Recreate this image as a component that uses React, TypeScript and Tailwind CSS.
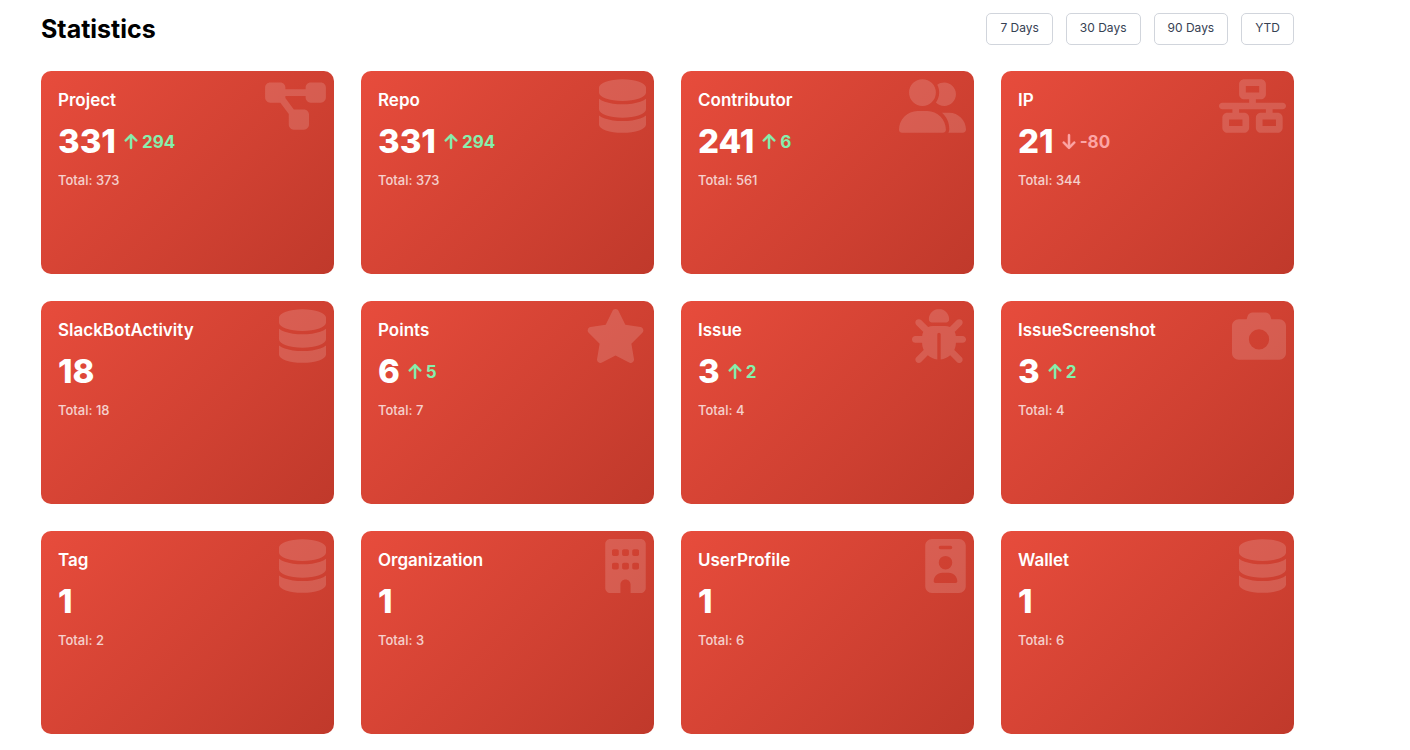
import type { IconType } from "react-icons";
import {
  FaArrowDown,
  FaArrowUp,
  FaBug,
  FaBuilding,
  FaCamera,
  FaDatabase,
  FaDiagramProject,
  FaIdBadge,
  FaNetworkWired,
  FaStar,
  FaUserGroup,
} from "react-icons/fa6";

interface Stat {
  name: string;
  count: number;
  change?: number;
  total: number;
  icon: IconType;
  iconWidth: string;
}

const stats: Stat[] = [
  { name: "Project", count: 331, change: 294, total: 373, icon: FaDiagramProject, iconWidth: "w-[61px]" },
  { name: "Repo", count: 331, change: 294, total: 373, icon: FaDatabase, iconWidth: "w-[47px]" },
  { name: "Contributor", count: 241, change: 6, total: 561, icon: FaUserGroup, iconWidth: "w-[67px]" },
  { name: "IP", count: 21, change: -80, total: 344, icon: FaNetworkWired, iconWidth: "w-[67px]" },
  { name: "SlackBotActivity", count: 18, total: 18, icon: FaDatabase, iconWidth: "w-[47px]" },
  { name: "Points", count: 6, change: 5, total: 7, icon: FaStar, iconWidth: "w-[61px]" },
  { name: "Issue", count: 3, change: 2, total: 4, icon: FaBug, iconWidth: "w-[54px]" },
  { name: "IssueScreenshot", count: 3, change: 2, total: 4, icon: FaCamera, iconWidth: "w-[54px]" },
  { name: "Tag", count: 1, total: 2, icon: FaDatabase, iconWidth: "w-[47px]" },
  { name: "Organization", count: 1, total: 3, icon: FaBuilding, iconWidth: "w-[41px]" },
  { name: "UserProfile", count: 1, total: 6, icon: FaIdBadge, iconWidth: "w-[41px]" },
  { name: "Wallet", count: 1, total: 6, icon: FaDatabase, iconWidth: "w-[47px]" },
];

const periods = ["7 Days", "30 Days", "90 Days", "YTD"];

function Change({ value }: { value: number }) {
  const up = value > 0;
  const Arrow = up ? FaArrowUp : FaArrowDown;
  return (
    <span
      className={
        "flex items-center gap-1 pt-px text-[17px] leading-6 font-bold " +
        (up ? "text-[#86efac]" : "text-[#fca5a5]")
      }
    >
      <Arrow className="h-[17px] w-[14px] stroke-current stroke-[12]" aria-hidden="true" />
      {value}
    </span>
  );
}

function StatCard({ name, count, change, total, icon: Icon, iconWidth }: Stat) {
  return (
    <article className="relative min-h-[203px] rounded-[10px] bg-[linear-gradient(135deg,#e74c3c,#c0392b)] p-[17px] text-white">
      <Icon
        className={"absolute top-2 right-2 h-[54px] opacity-15 " + iconWidth}
        aria-hidden="true"
      />
      <h2 className="text-[17px] leading-6 font-semibold">{name}</h2>
      <div className="mt-2 flex h-[42px] items-center gap-2">
        <span className="text-[33px] leading-[42px] font-extrabold">{count}</span>
        {change !== undefined && <Change value={change} />}
      </div>
      <p className="mt-2 text-[13px] leading-5 font-medium opacity-75">Total: {total}</p>
    </article>
  );
}

export default function App() {
  return (
    <main className="bg-white pt-[13px] pr-[116px] pb-4 pl-[41px] font-['Inter',sans-serif]">
      <header className="mb-[26px] flex items-center justify-between">
        <h1 className="text-[25px] leading-8 font-bold text-black">Statistics</h1>
        <div className="flex gap-[13px]">
          {periods.map((period) => (
            <button
              key={period}
              type="button"
              className="h-8 rounded-[5px] border border-gray-300 bg-white px-[13px] pb-0.5 text-[12px] leading-4 font-normal text-gray-700"
            >
              {period}
            </button>
          ))}
        </div>
      </header>
      <section className="grid grid-cols-4 gap-[27px]" aria-label="Statistics">
        {stats.map((stat) => (
          <StatCard key={stat.name} {...stat} />
        ))}
      </section>
    </main>
  );
}
